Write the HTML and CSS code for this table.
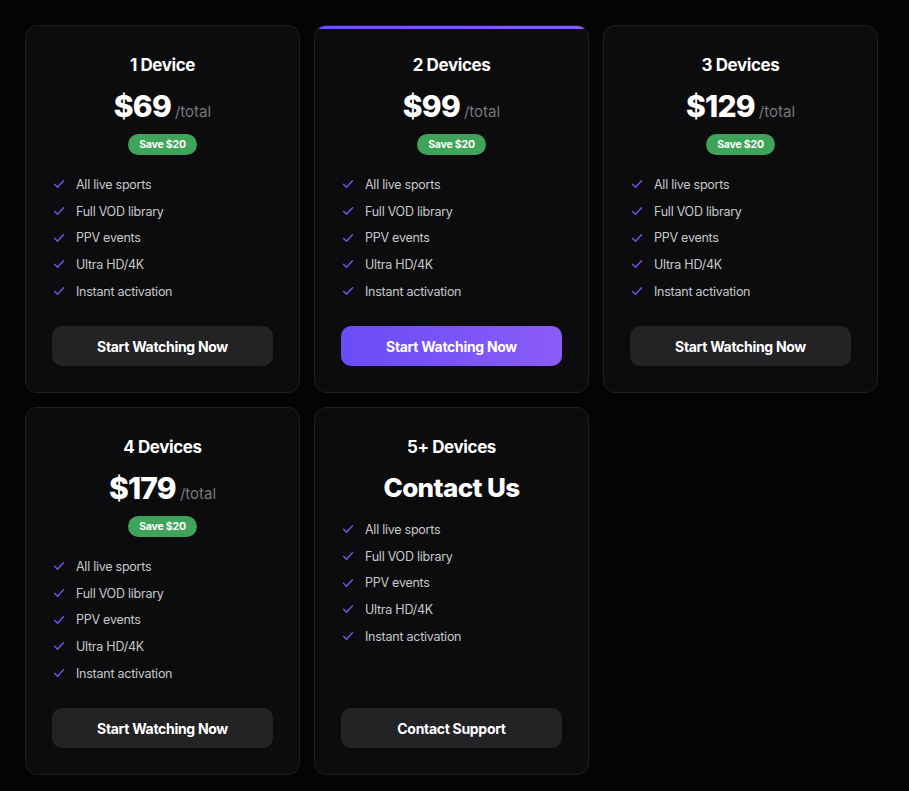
FILE: index.html
```html
<!DOCTYPE html>
<html>
<head>
<meta charset="utf-8">
<link rel="stylesheet" href="styles.css">
</head>
<body>
<div class="grid">
  <div class="card">
    <h3 class="name">1 Device</h3>
    <div class="price"><span class="amt">$69</span><span class="per">/total</span></div>
    <div class="badge-wrap"><span class="badge">Save $20</span></div>
    <ul class="feats">
      <li><svg viewBox="0 0 12 12"><path d="M1.5 6.3l3 3 6-6.5"/></svg>All live sports</li>
      <li><svg viewBox="0 0 12 12"><path d="M1.5 6.3l3 3 6-6.5"/></svg>Full VOD library</li>
      <li><svg viewBox="0 0 12 12"><path d="M1.5 6.3l3 3 6-6.5"/></svg>PPV events</li>
      <li><svg viewBox="0 0 12 12"><path d="M1.5 6.3l3 3 6-6.5"/></svg>Ultra HD/4K</li>
      <li><svg viewBox="0 0 12 12"><path d="M1.5 6.3l3 3 6-6.5"/></svg>Instant activation</li>
    </ul>
    <button class="btn">Start Watching Now</button>
  </div>
  <div class="card featured">
    <h3 class="name">2 Devices</h3>
    <div class="price"><span class="amt">$99</span><span class="per">/total</span></div>
    <div class="badge-wrap"><span class="badge">Save $20</span></div>
    <ul class="feats">
      <li><svg viewBox="0 0 12 12"><path d="M1.5 6.3l3 3 6-6.5"/></svg>All live sports</li>
      <li><svg viewBox="0 0 12 12"><path d="M1.5 6.3l3 3 6-6.5"/></svg>Full VOD library</li>
      <li><svg viewBox="0 0 12 12"><path d="M1.5 6.3l3 3 6-6.5"/></svg>PPV events</li>
      <li><svg viewBox="0 0 12 12"><path d="M1.5 6.3l3 3 6-6.5"/></svg>Ultra HD/4K</li>
      <li><svg viewBox="0 0 12 12"><path d="M1.5 6.3l3 3 6-6.5"/></svg>Instant activation</li>
    </ul>
    <button class="btn primary">Start Watching Now</button>
  </div>
  <div class="card">
    <h3 class="name">3 Devices</h3>
    <div class="price"><span class="amt">$129</span><span class="per">/total</span></div>
    <div class="badge-wrap"><span class="badge">Save $20</span></div>
    <ul class="feats">
      <li><svg viewBox="0 0 12 12"><path d="M1.5 6.3l3 3 6-6.5"/></svg>All live sports</li>
      <li><svg viewBox="0 0 12 12"><path d="M1.5 6.3l3 3 6-6.5"/></svg>Full VOD library</li>
      <li><svg viewBox="0 0 12 12"><path d="M1.5 6.3l3 3 6-6.5"/></svg>PPV events</li>
      <li><svg viewBox="0 0 12 12"><path d="M1.5 6.3l3 3 6-6.5"/></svg>Ultra HD/4K</li>
      <li><svg viewBox="0 0 12 12"><path d="M1.5 6.3l3 3 6-6.5"/></svg>Instant activation</li>
    </ul>
    <button class="btn">Start Watching Now</button>
  </div>
  <div class="card">
    <h3 class="name">4 Devices</h3>
    <div class="price"><span class="amt">$179</span><span class="per">/total</span></div>
    <div class="badge-wrap"><span class="badge">Save $20</span></div>
    <ul class="feats">
      <li><svg viewBox="0 0 12 12"><path d="M1.5 6.3l3 3 6-6.5"/></svg>All live sports</li>
      <li><svg viewBox="0 0 12 12"><path d="M1.5 6.3l3 3 6-6.5"/></svg>Full VOD library</li>
      <li><svg viewBox="0 0 12 12"><path d="M1.5 6.3l3 3 6-6.5"/></svg>PPV events</li>
      <li><svg viewBox="0 0 12 12"><path d="M1.5 6.3l3 3 6-6.5"/></svg>Ultra HD/4K</li>
      <li><svg viewBox="0 0 12 12"><path d="M1.5 6.3l3 3 6-6.5"/></svg>Instant activation</li>
    </ul>
    <button class="btn">Start Watching Now</button>
  </div>
  <div class="card">
    <h3 class="name">5+ Devices</h3>
    <div class="contact">Contact Us</div>
    <ul class="feats tight">
      <li><svg viewBox="0 0 12 12"><path d="M1.5 6.3l3 3 6-6.5"/></svg>All live sports</li>
      <li><svg viewBox="0 0 12 12"><path d="M1.5 6.3l3 3 6-6.5"/></svg>Full VOD library</li>
      <li><svg viewBox="0 0 12 12"><path d="M1.5 6.3l3 3 6-6.5"/></svg>PPV events</li>
      <li><svg viewBox="0 0 12 12"><path d="M1.5 6.3l3 3 6-6.5"/></svg>Ultra HD/4K</li>
      <li><svg viewBox="0 0 12 12"><path d="M1.5 6.3l3 3 6-6.5"/></svg>Instant activation</li>
    </ul>
    <button class="btn">Contact Support</button>
  </div>
</div>
</body>
</html>
```
FILE: styles.css
```css
* { box-sizing: border-box; }
html, body { margin: 0; padding: 0; background: #040405; }
body {
  font-family: Inter, "Noto Sans", sans-serif;
  color: #fff;
  padding: 25px;
}
.grid {
  width: 853px;
  display: grid;
  grid-template-columns: repeat(3, 275px);
  gap: 14px;
}
.card {
  position: relative;
  background: #0c0c0e;
  border: 1px solid #1f1f22;
  border-radius: 12px;
  padding: 26px;
  display: flex;
  flex-direction: column;
  overflow: hidden;
  min-height: 368px;
}
.card.featured::before {
  content: "";
  position: absolute;
  left: 0; right: 0; top: 0;
  height: 3px;
  background: linear-gradient(90deg, #6d4ef6, #8b5cf6);
}
.name {
  margin: 2px 0 0;
  font-size: 17px;
  font-weight: 700;
  text-align: center;
  letter-spacing: -0.4px;
  line-height: 22px;
}
.price {
  margin-top: 10px;
  text-align: center;
  line-height: 40px;
}
.amt {
  font-size: 30px;
  font-weight: 800;
  letter-spacing: -0.8px;
}
.per {
  font-size: 15px;
  color: #77777c;
  margin-left: 4px;
}
.badge-wrap { text-align: center; margin-top: 0; }
.badge {
  display: inline-block;
  background: #3fa45a;
  color: #fff;
  font-size: 10.5px;
  font-weight: 700;
  line-height: 21px;
  padding: 0 11px;
  border-radius: 11px;
  letter-spacing: -0.2px;
}
.contact {
  margin-top: 12px;
  text-align: center;
  font-size: 26px;
  font-weight: 800;
  letter-spacing: -0.6px;
  line-height: 36px;
}
.feats {
  list-style: none;
  margin: 16px 0 0;
  padding: 0 0 0 1px;
}
.feats.tight { margin-top: 10px; }
.feats li {
  display: flex;
  align-items: center;
  font-size: 12.5px;
  color: #c8c8cc;
  line-height: 17px;
  height: 26.7px;
  letter-spacing: -0.25px;
}
.feats svg {
  width: 12px;
  height: 12px;
  margin-right: 11px;
  fill: none;
  stroke: #7456ee;
  stroke-width: 1.4;
  stroke-linecap: round;
  stroke-linejoin: round;
}
.btn {
  margin-top: auto;
  width: 100%;
  height: 40px;
  border: 0;
  border-radius: 10px;
  background: #232326;
  color: #fff;
  font-family: inherit;
  font-size: 14px;
  font-weight: 700;
  letter-spacing: -0.3px;
}
.btn.primary {
  background: linear-gradient(90deg, #6a4cf6, #8b5cf6);
}
```
